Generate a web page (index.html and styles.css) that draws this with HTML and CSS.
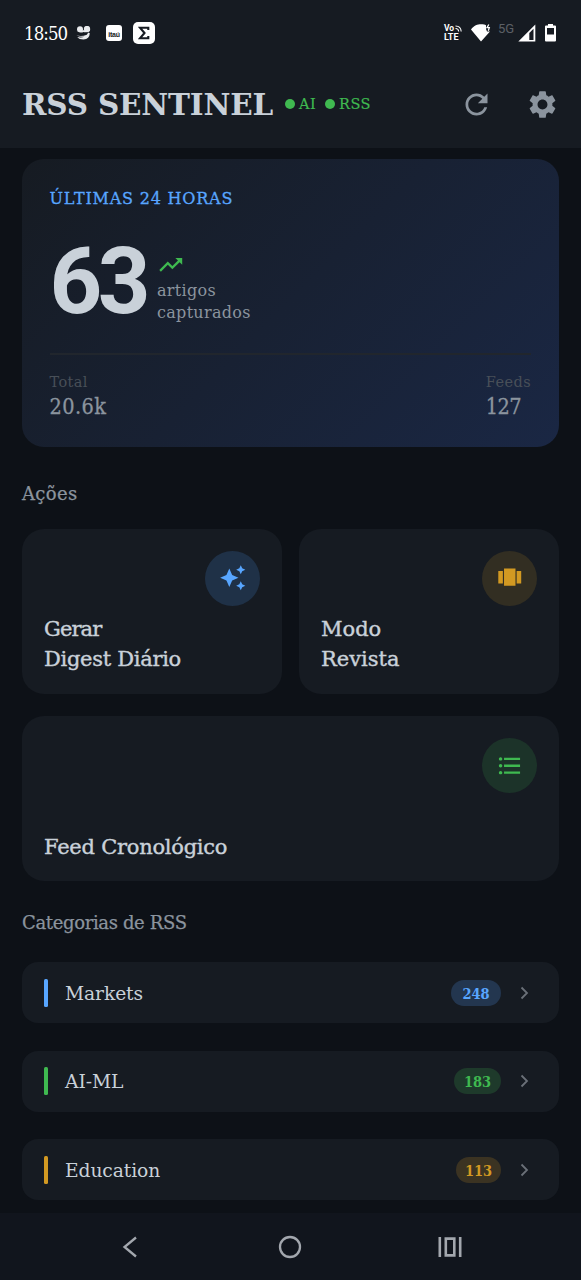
FILE: index.html
```
<!DOCTYPE html>
<html lang="pt-BR">
<head>
<meta charset="utf-8">
<title>RSS Sentinel</title>
<link rel="stylesheet" href="styles.css">
</head>
<body>
<div class="top">
  <div class="status">
    <span class="clock">18:50</span>
    <svg class="st-smile" width="15" height="15" viewBox="0 0 15 15" fill="#e9ebee"><circle cx="4" cy="3.300" r="3"/><circle cx="11" cy="3" r="3.200"/><path d="M0 4.500q3.500 2.500 7-.5 3.500 2 7-1v1.500q-3 2.500-6.500 1.500Q4 7.500 0 4.500z"/><path d="M.3 9.300q5 1.800 10.500-.5l1.500-2.300 1.500.8Q13.500 13 7.500 13.500 3 13.500 1.300 11q4 1 7-.3-4 .6-8-1.400z"/></svg>
    <span class="itau">itaú</span>
    <span class="sigma"><svg width="12" height="14" viewBox="0 0 12 14" fill="none" stroke="#171b22" stroke-width="2.100"><path d="M10.300 4V1.800H2l4.500 5.200L2 12.200h8.300V10"/></svg></span>
    <span class="grow"></span>
    <span class="volte"><span class="vo">Vo<svg width="7" height="7" viewBox="0 0 7 7" fill="none" stroke="#fff" stroke-width="1.100"><path d="M.5 1C4 1 6 3.500 6.200 6.500M.5 3.500C2.500 3.500 3.600 5 3.700 6.500"/></svg></span><span class="lte">LTE</span></span>
    <svg class="wifi" width="20" height="18" viewBox="0 0 20 18"><path d="M0 5.500C3 1.500 6.500.3 10 .3c2.500 0 4 .4 5 1V5l1 2.500h3L10 17.500z" fill="#fff"/><path d="M17.800.5L16 3.600h2.300l-1 3.200" stroke="#fff" stroke-width="1.300" fill="none"/></svg>
    <span class="g5">5G</span>
    <svg class="signal" width="18" height="18" viewBox="0 0 18 18"><path d="M.3 17.500L17.300.5v17z" fill="#fff"/><path d="M11.300 9v7h4.200V4.800z" fill="#171b22"/></svg>
    <svg class="batt" width="11" height="18" viewBox="0 0 11 18"><path d="M3 0h5v1.500h2q1 0 1 1v14q0 1-1 1H1q-1 0-1-1v-14q0-1 1-1h2z" fill="#fff"/><path d="M2 4h7v6.500H2z" fill="#171b22"/></svg>
  </div>
  <header class="bar">
    <h1 class="title">RSS SENTINEL</h1>
    <span class="dot"></span><span class="flag flag-ai">AI</span>
    <span class="dot"></span><span class="flag flag-rss">RSS</span>
    <span class="grow"></span>
    <svg class="i33" viewBox="0 0 24 24" fill="#8b949e"><path d="M17.650 6.350C16.200 4.900 14.210 4 12 4c-4.420 0-7.990 3.580-7.990 8s3.570 8 7.990 8c3.730 0 6.840-2.550 7.730-6h-2.080c-.82 2.330-3.040 4-5.650 4-3.310 0-6-2.690-6-6s2.690-6 6-6c1.660 0 3.140.69 4.220 1.780L13 11h7V4l-2.350 2.350z"/></svg>
    <svg class="i33" viewBox="0 0 24 24" fill="#8b949e"><path d="M19.140 12.940c.04-.3.060-.61.060-.94 0-.32-.02-.64-.07-.94l2.030-1.580c.18-.14.230-.41.120-.61l-1.920-3.320c-.12-.22-.37-.29-.59-.22l-2.390.96c-.5-.38-1.030-.7-1.620-.94l-.36-2.540c-.04-.24-.24-.41-.48-.41h-3.840c-.24 0-.43.170-.47.410l-.36 2.540c-.59.240-1.130.57-1.620.94l-2.390-.96c-.22-.08-.47 0-.59.220L2.740 8.870c-.12.210-.08.470.12.610l2.030 1.580c-.05.300-.09.630-.09.940s.02.640.070.940l-2.030 1.580c-.18.140-.23.410-.12.610l1.920 3.320c.12.220.37.290.59.220l2.390-.96c.5.380 1.030.7 1.620.94l.36 2.540c.05.240.24.410.48.410h3.840c.24 0 .44-.17.470-.41l.36-2.540c.59-.24 1.130-.56 1.620-.94l2.390.96c.22.080.47 0 .59-.22l1.920-3.320c.12-.22.070-.47-.12-.61l-2.010-1.580zM12 15.600c-1.980 0-3.600-1.620-3.600-3.600s1.620-3.600 3.600-3.600 3.600 1.620 3.600 3.600-1.620 3.600-3.600 3.600z"/></svg>
  </header>
</div>

<main class="content">
  <section class="hero">
    <div class="eyebrow"><span>ÚLTIMAS 24 HORAS</span></div>
    <div class="count">
      <span class="big">63</span>
      <div class="count-side">
        <svg class="i27" viewBox="0 0 24 24" fill="#3fb950"><path d="M16 6l2.290 2.290-4.880 4.880-4-4L2 16.590 3.410 18l6-6 4 4 6.300-6.290L22 12V6z"/></svg>
        <span>artigos</span><span>capturados</span>
      </div>
    </div>
    <div class="totals">
      <div class="stat"><span class="k">Total</span><span class="v v-total">20.6k</span></div>
      <div class="stat"><span class="k">Feeds</span><span class="v v-feeds">127</span></div>
    </div>
  </section>

  <h2 class="sec sec-acoes">Ações</h2>
  <section class="actions">
    <div class="card">
      <span class="circle blue"><svg class="i27" viewBox="0 0 24 24" fill="#58a6ff"><path d="M19 9l1.250-2.750L23 5l-2.750-1.250L19 1l-1.250 2.750L15 5l2.750 1.250zM19 15l-1.250 2.750L15 19l2.750 1.250L19 23l1.250-2.750L23 19l-2.750-1.250zM11.500 9.500L9 4 6.500 9.500 1 12l5.500 2.500L9 20l2.500-5.500L17 12z"/></svg></span>
      <span class="label"><span class="l-gerar">Gerar</span><br><span class="l-digest">Digest Diário</span></span>
    </div>
    <div class="card">
      <span class="circle amber"><svg class="i27" viewBox="0 0 24 24" fill="#d29922"><path d="M7 19h10V4H7v15zm-5-2h4V6H2v11zM18 6v11h4V6h-4z"/></svg></span>
      <span class="label"><span class="l-modo">Modo</span><br><span class="l-revista">Revista</span></span>
    </div>
    <div class="card wide">
      <span class="circle green"><svg class="i27" viewBox="0 0 24 24" fill="#3fb950"><path d="M4 10.500c-.83 0-1.500.67-1.500 1.500s.67 1.500 1.500 1.500 1.500-.67 1.500-1.500-.67-1.500-1.500-1.500zm0-6c-.83 0-1.500.67-1.500 1.500S3.170 7.500 4 7.500 5.500 6.830 5.500 6 4.830 4.500 4 4.500zm0 12c-.83 0-1.500.68-1.500 1.500s.68 1.500 1.500 1.500 1.500-.68 1.500-1.500-.67-1.500-1.500-1.500zM7 19h14v-2H7v2zm0-6h14v-2H7v2zm0-8v2h14V5H7z"/></svg></span>
      <span class="label"><span class="l-feed">Feed Cronológico</span></span>
    </div>
  </section>

  <h2 class="sec sec-cat">Categorias de RSS</h2>
  <section class="cats">
    <div class="row c-blue"><i class="stripe"></i><span class="name">Markets</span><span class="grow"></span><span class="chip chip-248">248</span><svg class="chev" viewBox="0 0 9 14"><path d="M1.500 1.500L7 7l-5.500 5.500"/></svg></div>
    <div class="row c-green"><i class="stripe"></i><span class="name">AI-ML</span><span class="grow"></span><span class="chip chip-183">183</span><svg class="chev" viewBox="0 0 9 14"><path d="M1.500 1.500L7 7l-5.500 5.500"/></svg></div>
    <div class="row c-amber"><i class="stripe"></i><span class="name">Education</span><span class="grow"></span><span class="chip chip-113">113</span><svg class="chev" viewBox="0 0 9 14"><path d="M1.500 1.500L7 7l-5.500 5.500"/></svg></div>
  </section>
</main>

<nav class="nav">
  <svg width="16" height="22" viewBox="0 0 16 22" fill="none" stroke="#a3a7ae" stroke-width="2.300"><path d="M14 1.500L2.500 11 14 20.500"/></svg>
  <svg width="24" height="24" viewBox="0 0 24 24" fill="none" stroke="#a3a7ae" stroke-width="2.300"><circle cx="12" cy="12" r="10"/></svg>
  <svg width="24" height="20" viewBox="0 0 24 20" fill="none" stroke="#a3a7ae" stroke-width="2.600"><path d="M1.800 0v20M22.200 0v20"/><path d="M7.800 1.600h8.500v16.800H7.800z"/></svg>
</nav>
</body>
</html>
```

FILE: styles.css
```
* { box-sizing: border-box; }
body {
  margin: 0;
  width: 581px;
  height: 1280px;
  overflow: hidden;
  background: #0d1117;
  color: #c9d1d9;
  font-family: "DejaVu Serif", serif;
  display: flex;
  flex-direction: column;
}
svg { display: block; flex: none; }
span { white-space: nowrap; }
.grow { flex: 1; }
.top { height: 148px; background: #161b22; flex: none; }

.status { height: 66px; padding: 0 25px 0 24px; display: flex; align-items: center; color: #fff; }
.clock { width: 44px; font-family: "DejaVu Serif Condensed", serif; font-size: 18.500px; letter-spacing: -.95px; }
.st-smile { margin-left: 8px; }
.itau {
  width: 16px; height: 16px; margin-left: 15px; border-radius: 3px; background: #fff; color: #171b22;
  font: bold 7px/19px "Liberation Sans", sans-serif; letter-spacing: -.2px; text-align: center;
}
.sigma { width: 22px; height: 22px; margin-left: 11px; border-radius: 5px; background: #fff; display: grid; place-items: center; }
.volte { width: 20px; display: flex; flex-direction: column; font: bold 8.500px/9px Roboto, sans-serif; }
.vo { display: flex; align-items: center; gap: 1px; }
.lte { font-size: 9px; }
.wifi { margin-left: 7px; }
.g5 { width: 17px; margin: -8px 0 0 7px; font: 400 13px/14px Roboto, sans-serif; color: #5c6066; }
.signal { margin-left: 3px; }
.batt { margin-left: 9px; }

.bar { height: 76px; padding: 0 22px; display: flex; align-items: center; }
.title { margin: 0; width: 263px; font-size: 29.500px; line-height: 36px; padding-top: 1px; font-weight: 700; letter-spacing: -.2px; white-space: nowrap; }
.dot { width: 10px; height: 10px; border-radius: 50%; background: #3fb950; margin-right: 4px; flex: none; }
.flag { font-size: 14.500px; color: #3fb950; letter-spacing: .5px; -webkit-text-stroke: .2px; }
.flag-ai { width: 26px; }
.i33 { width: 33px; height: 33px; margin-left: 33px; }
.i27 { width: 27.500px; height: 27.500px; }

.content { flex: 1; padding: 11px 22px 0; min-height: 0; overflow: hidden; }
.hero {
  height: 288px; padding: 28px 28px 0 27.500px; border-radius: 22px;
  background: linear-gradient(135deg, #161b22 0%, #1a2744 100%);
}
.eyebrow { height: 24px; font-size: 16px; line-height: 24px; color: #58a6ff; letter-spacing: .8px; -webkit-text-stroke: .3px; }
.count { height: 115px; margin-top: 27px; display: flex; }
.big { width: 107.500px; font: bold 92px/87px Roboto, sans-serif; letter-spacing: -4.500px; }
.count-side { display: flex; flex-direction: column; font-size: 16px; line-height: 22px; color: #8b949e; letter-spacing: .3px; }
.count-side svg { margin: 13px 0 1px; }
.totals { border-top: 2px solid #21262d; padding-top: 16px; display: flex; justify-content: space-between; }
.stat { display: flex; flex-direction: column; }
.k { font-size: 14.500px; line-height: 22px; color: #484f58; letter-spacing: .4px; }
.v { font-family: "DejaVu Serif Condensed", serif; font-size: 21.500px; line-height: 28px; color: #8b949e; -webkit-text-stroke: .3px; }
.v-total { letter-spacing: .4px; }
.v-feeds { letter-spacing: -.6px; }

.sec { margin: 0; font-size: 18px; font-weight: 400; line-height: 24px; color: #8b949e; -webkit-text-stroke: .25px; }
.sec-acoes { padding: 35px 0 22.500px; letter-spacing: .35px; }
.sec-cat { padding: 30px 0 27px; letter-spacing: -.35px; }
.actions { display: grid; grid-template-columns: 1fr 1fr; gap: 22.500px 17px; }
.card { height: 165px; padding: 22px 22px 19px; border-radius: 22px; background: #161b22; display: flex; flex-direction: column; justify-content: space-between; }
.wide { grid-column: 1 / 3; }
.circle { width: 55px; height: 55px; border-radius: 50%; align-self: flex-end; display: grid; place-items: center; }
.circle.blue { background: #1f3147; }
.circle.amber { background: #322e22; }
.circle.green { background: #1c3329; }
.label { font-size: 21px; line-height: 30.500px; -webkit-text-stroke: .4px; }
.l-gerar { letter-spacing: -.9px; }
.l-digest { letter-spacing: -.3px; }
.l-modo { letter-spacing: 0; }
.l-revista { letter-spacing: 0; }
.l-feed { letter-spacing: -.25px; }

.cats { display: flex; flex-direction: column; gap: 27.500px; }
.row { height: 61px; padding: 0 30px 0 22px; border-radius: 16px; background: #161b22; display: flex; align-items: center; }
.stripe { width: 4px; height: 28px; border-radius: 1.500px; background: var(--c); margin-right: 17px; }
.name { font-size: 18.700px; letter-spacing: -.1px; padding-top: 1px; }
.chip { height: 26px; border-radius: 13px; background: var(--bg); color: var(--c); font-family: "DejaVu Serif Condensed", serif; font-size: 14.500px; font-weight: 700; line-height: 27px; text-align: center; margin-right: 19px; }
.c-blue { --c: #58a6ff; --bg: #23364f; }
.c-green { --c: #3fb950; --bg: #1e3a2b; }
.c-amber { --c: #d29922; --bg: #3b3322; }
.chip-248 { width: 50px; }
.chip-183 { width: 47px; }
.chip-113 { width: 45px; }
.chev { width: 9px; height: 14px; fill: none; stroke: #6a7078; stroke-width: 1.800; }

.nav { height: 67px; flex: none; padding: 0 119px 0 122px; background: #11151d; display: flex; align-items: center; justify-content: space-between; }
.nav svg:nth-child(2) { margin-left: 4px; }
```
